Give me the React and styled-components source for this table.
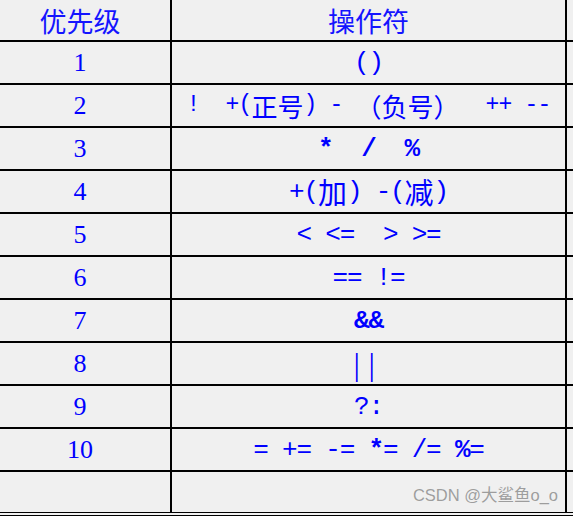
import React from "react";
import styled, { createGlobalStyle } from "styled-components";

const Global = createGlobalStyle`
  html, body { margin: 0; padding: 0; background: #f0f0f0; }
  body { width: 573px; height: 516px; overflow: hidden; }
`;

const Table = styled.div`
  position: relative;
  width: 573px;
  border-bottom: 4px double #000;
  background: #f0f0f0;
`;

const Row = styled.div`
  display: grid;
  grid-template-columns: 172px 395px 1fr;
  height: ${(p) => p.$h}px;
  border-bottom: ${(p) => (p.$last ? "none" : "2px solid #000")};
`;

const Cell = styled.div`
  display: flex;
  align-items: center;
  justify-content: center;
  border-right: ${(p) => (p.$edge ? "none" : "2px solid #000")};
  color: #0000ff;
  white-space: pre;
  padding: ${(p) => p.$pad || "0"};
`;

const HeadText = styled.span`
  font-family: "Noto Sans CJK SC", sans-serif;
  font-size: 27px;
  line-height: 1;
  color: #1414ff;
`;

const Num = styled.span`
  font-family: "Liberation Serif", serif;
  font-size: 26px;
  line-height: 1;
`;

const Ops = styled.span`
  font-family: ${(p) => (p.$serif ? '"Liberation Serif", serif' : '"Liberation Mono", monospace')};
  font-size: ${(p) => p.$size || 26}px;
  letter-spacing: ${(p) => (p.$ls === undefined ? -1.2 : p.$ls)}px;
  line-height: 1;
  font-weight: ${(p) => (p.$bold ? 700 : 400)};
  display: inline-flex;
  align-items: center;
`;

const Cjk = styled.span`
  font-family: "Noto Sans CJK SC", sans-serif;
  font-size: ${(p) => p.$size}px;
  font-weight: 400;
  letter-spacing: 0;
`;

const Strong = styled.span`
  font-weight: 700;
`;

const Watermark = styled.span`
  position: absolute;
  right: 15px;
  bottom: 9px;
  line-height: 1;
  font-family: "Liberation Sans", "Noto Sans CJK SC", sans-serif;
  font-size: 16.5px;
  color: rgba(130, 130, 130, 0.75);
`;

const rows = [
  { n: "1", op: "()" },
  {
    n: "2",
    size: 23,
    ls: -0.8,
    op: (
      <>
        {"!  +("}
        <Cjk $size={26}>正号</Cjk>
        {") - "}
        <Cjk $size={26}>（负号）</Cjk>
        {"  ++ --"}
      </>
    ),
  },
  { n: "3", op: "*  /  %", bold: true },
  {
    n: "4",
    op: (
      <>
        {"+("}
        <Cjk $size={29}>加</Cjk>
        {") -("}
        <Cjk $size={29}>减</Cjk>
        {")"}
      </>
    ),
  },
  { n: "5", op: "< <=  > >=" },
  { n: "6", op: "== !=" },
  { n: "7", op: "&&", bold: true },
  { n: "8", op: "||", size: 32, ls: 8.6, serif: true },
  { n: "9", op: "?:" },
  {
    n: "10",
    op: (
      <>
        {"= += -= "}
        <Strong>*</Strong>
        {"= /= "}
        <Strong>%</Strong>
        {"="}
      </>
    ),
  },
];

export default function App() {
  return (
    <>
      <Global />
      <Table>
        <Row $h={40}>
          <Cell $pad="0 10px 0 0"><HeadText>优先级</HeadText></Cell>
          <Cell><HeadText>操作符</HeadText></Cell>
          <Cell $edge />
        </Row>
        {rows.map((r) => (
          <Row key={r.n} $h={41}>
            <Cell $pad="0 10px 0 0"><Num>{r.n}</Num></Cell>
            <Cell>
              <Ops $bold={r.bold} $size={r.size} $ls={r.ls} $serif={r.serif}>{r.op}</Ops>
            </Cell>
            <Cell $edge />
          </Row>
        ))}
        <Row $h={40} $last>
          <Cell />
          <Cell />
          <Cell $edge />
        </Row>
        <Watermark>CSDN @大鲨鱼o_o</Watermark>
      </Table>
    </>
  );
}
